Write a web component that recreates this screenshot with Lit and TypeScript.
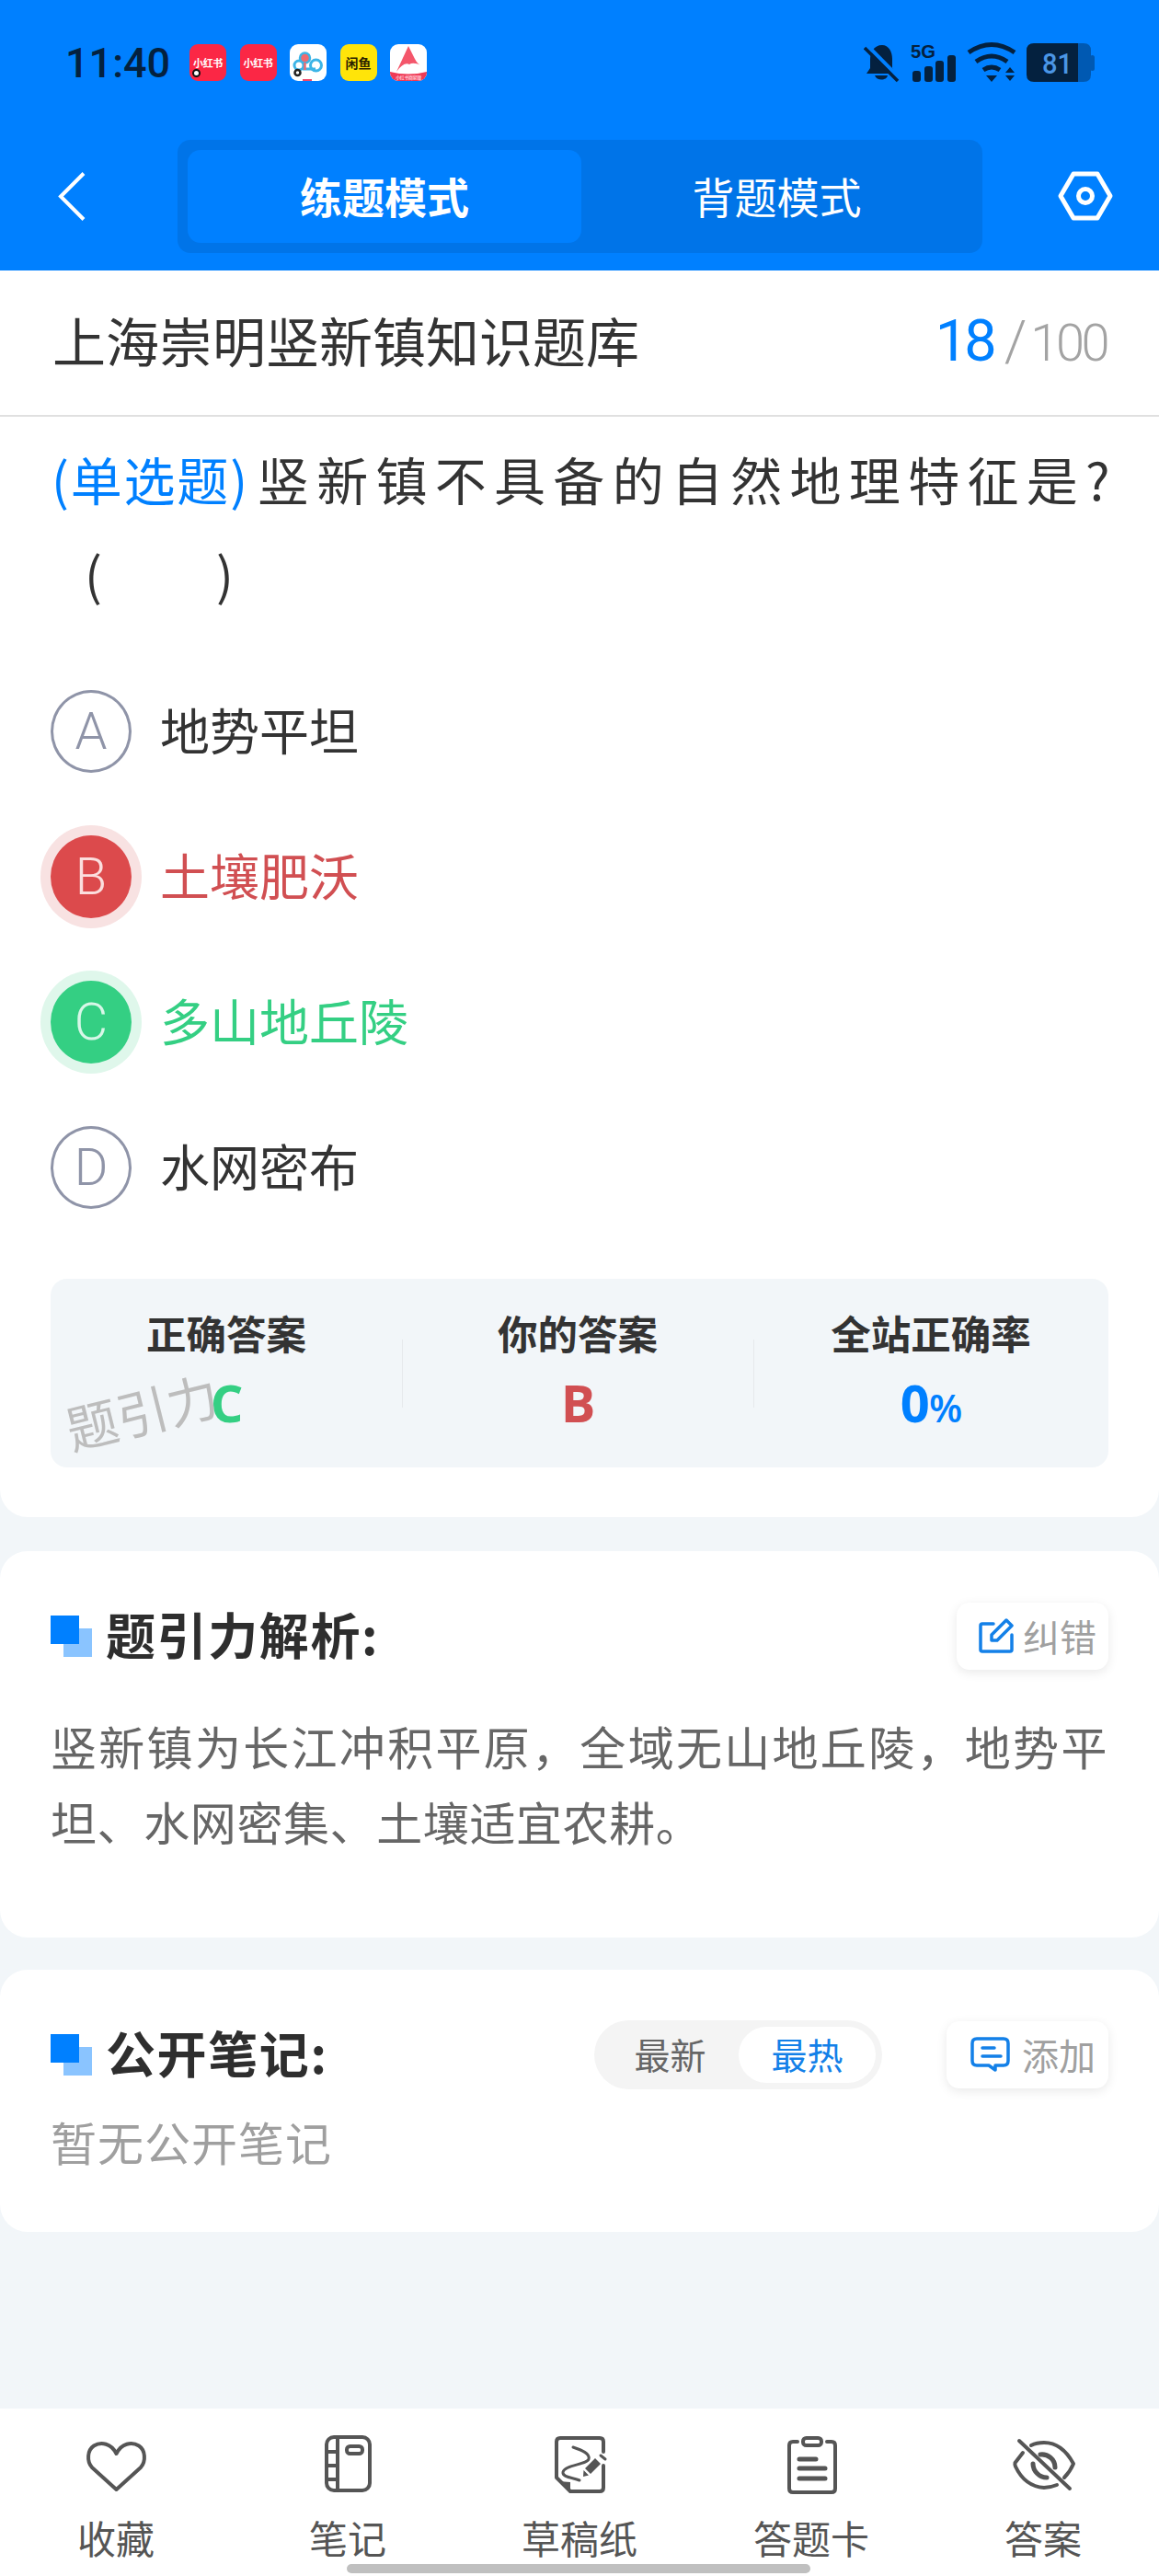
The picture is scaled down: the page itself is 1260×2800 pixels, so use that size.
import { LitElement, html, css, svg } from "lit";
import { customElement } from "lit/decorators.js";

const navIcons: Record<string, unknown> = {
  heart: svg`<path d="M40.5 60 L14 36 C8 29 9 17 16 12.5 C24 7.5 35 10 40.5 21 C46 10 57 7.5 65 12.5 C72 17 73 29 67 36 Z"/>`,
  note: svg`<rect x="17" y="3" width="47" height="58" rx="8"/><path d="M29 3 V61 M17 19 H29 M17 34 H29 M17 49 H29"/><rect x="39" y="13" width="17" height="8" rx="3.5"/>`,
  draft: svg`<path d="M66 19 V8 Q66 4 62 4 H19 Q15 4 15 8 V47 L30 62 H62 Q66 62 66 58 V34"/><path d="M17 51 L30 52 V62 Z" class="f"/><path d="M33 14 C42 17 52 21 50 27 C48 33 24 33 22 41 C21 47 33 47 40 50" stroke-width="3"/><path d="M57 26 L63 32 L52 43 L46 37 Z M44.5 39 L50 44.5 L44 46 Z" class="f"/><path d="M63 23 L68 27" stroke-width="3"/>`,
  card: svg`<path d="M25 8 H20 Q16 8 16 12 V59 Q16 63 20 63 H62 Q66 63 66 59 V12 Q66 8 62 8 H57"/><rect x="31" y="4" width="20" height="8" rx="3.5"/><path d="M27 27 H45 M27 37 H55 M27 48 H55" stroke-width="5"/>`,
  eye: svg`<path d="M18 20 L9.5 31 Q9 33 10 35 C17 50 28 57 41 58 C46 58 50 57 55 55"/><path d="M27 12 C31 10 36 9 41 9 C55 9 66 19 73 32 C70 39 67 43 63 47"/><path d="M29 32 C29 40 36 47 44 47 M37 22 C45 21 53 27 53 36" stroke-width="5"/><path d="M14 7 L69 59"/>`,
};

@customElement("app-root")
export class AppRoot extends LitElement {
  static styles = css`
    :host {
      display: block;
      width: 1260px;
      height: 2800px;
      position: relative;
      overflow: hidden;
      background: #f2f6f9;
      font-family: "Noto Sans CJK SC", "Liberation Sans", sans-serif;
      color: #333;
    }
    .page { height: 2800px; display: flex; flex-direction: column; }
    .top { background: #0080ff; height: 294px; flex: none; display: flex; flex-direction: column; }
    .status { height: 136px; flex: none; display: flex; align-items: center; padding: 0 0 0 71px; box-sizing: border-box; position: relative; }
    .time { font: 500 45px/1 "Roboto", sans-serif; color: #04213f; margin-top: 1px; width: 135px; flex: none; }
    .apps { display: flex; gap: 14.5px; }
    .app { width: 40px; height: 40px; border-radius: 9px; display: flex; align-items: center; justify-content: center; font-size: 11px; font-weight: 700; color: #fff; overflow: hidden; white-space: nowrap; letter-spacing: -0.4px; position: relative; }
    .red { background: #fb2745; }
    .yellow { background: #ffe409; color: #2a2200; font-size: 14px; letter-spacing: 0; }
    .white { background: #fff; }
    .dot { position: absolute; left: 3px; top: 27px; width: 5px; height: 5px; border-radius: 50%; background: #fff; border: 2.5px solid #111; box-sizing: content-box; }
    .sys { position: absolute; left: 939px; top: 39px; display: block; }
    .nav { height: 158px; flex: none; display: flex; align-items: flex-start; position: relative; padding: 16px 0 0 193px; box-sizing: border-box; }
    .back { position: absolute; left: 63px; top: 51px; }
    .gear { position: absolute; left: 1150px; top: 50px; }
    .seg { width: 875px; height: 123px; box-sizing: border-box; background: #0074e8; border-radius: 14px; padding: 11px; display: flex; }
    .seg span { flex: 1; display: flex; align-items: center; justify-content: center; color: #fff; font-size: 46px; padding-bottom: 3px; box-sizing: border-box; }
    .seg .on { background: #0080ff; border-radius: 14px; font-weight: 700; flex: none; width: 428px; }
    .main { background: #fff; flex: none; height: 1355px; border-radius: 0 0 30px 30px; }
    .head { height: 159px; box-sizing: border-box; border-bottom: 2px solid #e0e0e0; display: flex; align-items: center; justify-content: space-between; padding: 0 57px 0 57px; }
    .title { font-size: 58px; color: #333; line-height: 1; margin-top: -8px; }
    .count { display: flex; align-items: baseline; font: 300 56px/1 "Roboto", sans-serif; color: #a3a3a3; letter-spacing: -3.5px; margin-top: -4px; }
    .count b { font-weight: 400; font-size: 63px; color: #0080ff; margin-right: 12px; letter-spacing: -4px; }
    .count i { font-style: normal; font-size: 62px; margin-right: 4px; letter-spacing: 0; }
    .q { padding: 0 20px 0 56px; font-size: 56px; line-height: 103px; margin-top: 15px; letter-spacing: 8.3px; height: 206px; color: #333; }
    .q em { font-style: normal; color: #0080ff; letter-spacing: 1.8px; margin-right: 9px; }
    .blank { letter-spacing: 0; padding-left: 36px; display: block; white-space: pre; }
    .gap { display: inline-block; width: 124px; }
    .opts { display: flex; flex-direction: column; margin-top: 42px; }
    .opt { height: 158px; display: flex; align-items: center; padding-left: 55px; font-size: 54px; gap: 31px; color: #333; }
    .opt span { padding-bottom: 6px; }
    .opt .c { width: 88px; height: 90px; border-radius: 50%; box-sizing: border-box; border: 3px solid #8f94a8; color: #8f94a8; display: flex; align-items: center; justify-content: center; font: 300 56px/1 "Roboto", sans-serif; flex: none; }
    .opt.r { color: #d14f52; }
    .opt.r .c { background: #dc4a4c; border: none; color: #fbdede; box-shadow: 0 0 0 11px #f8e2e2; }
    .opt.g { color: #34cf83; }
    .opt.g .c { background: #34cf83; border: none; color: #d8f7e8; box-shadow: 0 0 0 11px #dff7eb; }
    .stats { margin: 42px 55px 0; height: 205px; background: #f2f6f9; border-radius: 18px; display: grid; grid-template-columns: 382px 382px 1fr; position: relative; }
    .st { display: flex; flex-direction: column; align-items: center; position: relative; padding-top: 29px; box-sizing: border-box; }
    .st .l { font-size: 43.5px; font-weight: 700; line-height: 60px; color: #333; }
    .st .v { font: 700 56px/60px "Open Sans", "Liberation Sans", sans-serif; margin-top: 15px; letter-spacing: -1px; }
    .st .v small { font-size: 42px; font-weight: 600; }
    .st + .st::before { content: ""; position: absolute; left: 0; top: 66px; height: 74px; width: 1px; background: #e6e9ec; }
    .wm { position: absolute; left: 15px; top: 115px; font-size: 56px; line-height: 1; color: #bdbdbd; transform: rotate(-14deg); }
    .card { background: #fff; border-radius: 30px; flex: none; padding: 0 55px; box-sizing: border-box; }
    .a1 { height: 420px; margin-top: 37px; }
    .a2 { height: 285px; margin-top: 35px; }
    .row { display: flex; align-items: center; padding-top: 56px; height: 72px; box-sizing: content-box; }
    .mark { width: 45px; height: 45px; position: relative; flex: none; margin-right: 15px; }
    .mark::before { content: ""; position: absolute; left: 0; top: 0; width: 31px; height: 31px; background: #0080ff; z-index: 1; }
    .mark::after { content: ""; position: absolute; left: 14px; top: 14px; width: 31px; height: 31px; background: #8ac4ff; }
    .h { font-size: 54px; font-weight: 700; color: #2e2e2e; letter-spacing: 1.6px; line-height: 1; flex: none; padding-bottom: 5px; }
    .btn { height: 73px; box-sizing: border-box; border-radius: 14px; background: #fff; box-shadow: 0 3px 12px rgba(0,0,0,0.09); display: flex; align-items: center; color: #a0a0a0; font-size: 40px; margin-left: auto; flex: none; }
    .a1 .btn { width: 165px; padding-left: 24px; gap: 10px; }
    .a2 .btn { width: 176px; padding-left: 26px; gap: 13px; margin-left: 0; }
    .btn svg { flex: none; fill: none; stroke: #1380e8; stroke-width: 3.5; stroke-linecap: round; stroke-linejoin: round; }
    .body { font-size: 50px; line-height: 82px; color: #666; margin-top: 42px; padding-right: 1px; letter-spacing: 0.6px; text-align: justify; }
    .tog { width: 313px; height: 75px; border-radius: 38px; background: #f4f4f4; display: flex; align-items: center; margin-left: auto; margin-right: 70px; padding: 0 7px 0 0; box-sizing: border-box; flex: none; font-size: 39px; color: #666; }
    .tog span { display: flex; align-items: center; justify-content: center; height: 61px; border-radius: 31px; padding-bottom: 2px; box-sizing: border-box; }
    .tog span:first-child { width: 157px; padding-left: 8px; }
    .tog span.on { width: 149px; background: #fff; color: #1380e8; }
    .none { font-size: 50px; color: #9f9f9f; margin-top: 23px; line-height: 70px; letter-spacing: 1px; }
    .spacer { flex: 1; }
    .tabs { height: 182px; flex: none; background: #fff; display: grid; grid-template-columns: repeat(5, 252px); position: relative; }
    .tab { display: flex; flex-direction: column; align-items: center; color: #555; font-size: 42px; line-height: 50px; padding-top: 28px; box-sizing: border-box; }
    .tab svg { display: block; width: 80px; height: 66px; fill: none; stroke: #555; stroke-width: 4; stroke-linecap: round; stroke-linejoin: round; margin-bottom: 21px; }
    .tab svg .f { fill: #555; stroke: none; }
    .home { position: absolute; left: 377px; bottom: 3px; width: 504px; height: 10px; border-radius: 5px; background: #c0c0c0; }
  `;

  private tab(name: string, label: string) {
    return html`<div class="tab"><svg viewBox="0 0 80 66">${navIcons[name]}</svg>${label}</div>`;
  }

  render() {
    return html`<div class="page">
      <div class="top">
        <div class="status">
          <div class="time">11:40</div>
          <div class="apps">
            <div class="app red">小红书<i class="dot"></i></div>
            <div class="app red">小红书</div>
            <div class="app white">
              <svg width="40" height="40" viewBox="0 0 40 40" fill="none"><circle cx="10" cy="23" r="5" stroke="#3cb4e6" stroke-width="3"/><circle cx="28.5" cy="23" r="6" stroke="#3cb4e6" stroke-width="3"/><path d="M14 27 H28" stroke="#3cb4e6" stroke-width="3"/><circle cx="16.5" cy="15" r="5.5" fill="#ef6a70" stroke="#3cb4e6" stroke-width="2.5"/><path d="M16.5 20 V28" stroke="#ef6a70" stroke-width="2.5"/><circle cx="8.5" cy="31" r="3" fill="#fff" stroke="#222" stroke-width="2.5"/><path d="M14 39 H24" stroke="#f0466a" stroke-width="2"/></svg>
            </div>
            <div class="app yellow">闲鱼</div>
            <div class="app white">
              <svg width="40" height="40" viewBox="0 0 40 40"><path d="M20 2 L7 30 Q15 19 21 22 Q25 19 34 23 Q30 22 27 16 Z" fill="#f4566b"/><path d="M0 30 Q20 35 40 30 V40 H0 Z" fill="#ef3a55"/><text x="20" y="38" text-anchor="middle" font-size="5" fill="#ffc9d1">小红书商家版</text></svg>
            </div>
          </div>
          <svg class="sys" width="252" height="51" viewBox="0 -8 252 51">
            <path d="M20 2 C11 2 7 10 7 18 V27 L3 33 H34 L31 27 V17 C31 9 27 2 20 2 Z M12 35 H26 C25 41 14 41 12 35 Z" fill="#04213f"/>
            <path d="M3.5 2 L40 39" stroke="#0080ff" stroke-width="4"/><path d="M1 5 L37 41" stroke="#04213f" stroke-width="3.5"/>
            <text x="51" y="16" font-family="Liberation Sans" font-weight="700" font-size="21" fill="#04213f" textLength="27" lengthAdjust="spacingAndGlyphs">5G</text>
            <rect x="53" y="30" width="9" height="12" rx="3" fill="#04213f"/><rect x="66" y="25" width="9" height="17" rx="3" fill="#04213f"/><rect x="78" y="19" width="9" height="23" rx="3" fill="#04213f"/><rect x="91" y="13" width="9" height="29" rx="3" fill="#04213f"/>
            <path d="M114 10 Q139 -7 164 10 M122 20 Q139 8 156 20 M130 29 Q139 23 148 29" stroke="#04213f" stroke-width="5" fill="none"/>
            <path d="M133 35 H145 L139 42 Z M154 32 L159 26 L164 32 Z M154 35 H164 L159 41 Z" fill="#04213f"/>
            <path d="M225 0 H239 Q247 0 247 8 V34 Q247 42 239 42 H225 Z" fill="#0059b2"/><rect x="246" y="13" width="5" height="17" rx="2.5" fill="#0059b2"/>
            <path d="M185 0 H233 V42 H185 Q177 42 177 34 V8 Q177 0 185 0 Z" fill="#04213f"/>
            <text x="194" y="33" font-family="Roboto" font-weight="500" font-size="32" fill="#4b96e6" textLength="33" lengthAdjust="spacingAndGlyphs">81</text>
          </svg>
        </div>
        <div class="nav">
          <svg class="back" width="30" height="53" viewBox="0 0 30 53" fill="none"><path d="M28 1.5 L3 26.5 L28 51.5" stroke="#fff" stroke-width="4"/></svg>
          <div class="seg"><span class="on">练题模式</span><span>背题模式</span></div>
          <svg class="gear" width="60" height="54" viewBox="0 0 60 54" fill="none" stroke="#fff" stroke-width="5"><path d="M17 3 H43 L57 27 L43 51 H17 L3 27 Z" stroke-linejoin="round"/><circle cx="30" cy="27" r="7.5"/></svg>
        </div>
      </div>
      <div class="main">
        <div class="head"><div class="title">上海崇明竖新镇知识题库</div><div class="count"><b>18</b><i>/</i>100</div></div>
        <div class="q"><em>(单选题)</em>竖新镇不具备的自然地理特征是?<span class="blank">(<span class="gap"></span>)</span></div>
        <div class="opts">
          <div class="opt"><div class="c">A</div><span>地势平坦</span></div>
          <div class="opt r"><div class="c">B</div><span>土壤肥沃</span></div>
          <div class="opt g"><div class="c">C</div><span>多山地丘陵</span></div>
          <div class="opt"><div class="c">D</div><span>水网密布</span></div>
        </div>
        <div class="stats">
          <div class="st"><div class="l">正确答案</div><div class="v" style="color:#34cf83">C</div></div>
          <div class="st"><div class="l">你的答案</div><div class="v" style="color:#d14f52">B</div></div>
          <div class="st"><div class="l">全站正确率</div><div class="v" style="color:#0080ff">0<small>%</small></div></div>
          <div class="wm">题引力</div>
        </div>
      </div>
      <div class="card a1">
        <div class="row"><div class="mark"></div><div class="h">题引力解析:</div>
          <div class="btn"><svg width="38" height="38" viewBox="0 0 38 38"><path d="M16 6 H4 Q2 6 2 8 V34 Q2 36 4 36 H34 Q36 36 36 34 V18"/><path d="M14 24 V18 L30 2 L36 8 L20 24 Z"/></svg>纠错</div>
        </div>
        <div class="body">竖新镇为长江冲积平原，全域无山地丘陵，地势平坦、水网密集、土壤适宜农耕。</div>
      </div>
      <div class="card a2">
        <div class="row"><div class="mark"></div><div class="h">公开笔记:</div>
          <div class="tog"><span>最新</span><span class="on">最热</span></div>
          <div class="btn"><svg width="43" height="38" viewBox="0 0 43 38"><path d="M7 2 H36 Q41 2 41 7 V26 Q41 31 36 31 H27 V36 L20 31 H7 Q2 31 2 26 V7 Q2 2 7 2 Z"/><path d="M13 12 H26 M13 21 H33"/></svg>添加</div>
        </div>
        <div class="none">暂无公开笔记</div>
      </div>
      <div class="spacer"></div>
      <div class="tabs">
        ${this.tab("heart", "收藏")}${this.tab("note", "笔记")}${this.tab("draft", "草稿纸")}${this.tab("card", "答题卡")}${this.tab("eye", "答案")}
        <div class="home"></div>
      </div>
    </div>`;
  }
}
